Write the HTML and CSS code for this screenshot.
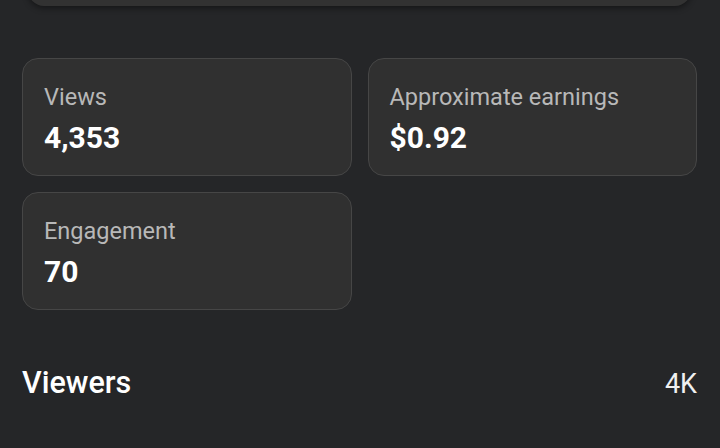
FILE: index.html
```html
<!DOCTYPE html>
<html>
<head>
<meta charset="utf-8">
<link rel="stylesheet" href="styles.css">
</head>
<body>
<div class="page">
  <div class="top-card"></div>
  <div class="stats">
    <div class="card">
      <div class="label">Views</div>
      <div class="value">4,353</div>
    </div>
    <div class="card">
      <div class="label">Approximate earnings</div>
      <div class="value">$0.92</div>
    </div>
    <div class="card">
      <div class="label">Engagement</div>
      <div class="value">70</div>
    </div>
  </div>
  <div class="section">
    <div class="section-title">Viewers</div>
    <div class="section-count">4K</div>
  </div>
</div>
</body>
</html>
```

FILE: styles.css
```css
html, body {
  margin: 0;
  padding: 0;
  background: #252628;
  height: 100%;
  overflow: hidden;
}
.page {
  padding: 0 23px 0 22px;
  font-family: Roboto, "Noto Sans", sans-serif;
  color: #ffffff;
}
.top-card {
  height: 30px;
  margin: -24px 6px 0 6px;
  background: #323232;
  border-radius: 0 0 16px 16px;
  box-shadow: 0 2px 6px rgba(0, 0, 0, 0.45);
}
.stats {
  margin-top: 52px;
  display: grid;
  grid-template-columns: 1fr 1fr;
  gap: 16px;
}
.card {
  background: #303030;
  border: 1px solid #464646;
  border-radius: 16px;
  padding: 24px 21px 20px 21px;
}
.label {
  font-size: 23.5px;
  line-height: 28px;
  color: #b8b8b8;
}
.value {
  margin-top: 10px;
  font-size: 30px;
  line-height: 34px;
  font-weight: 700;
  color: #ffffff;
}
.section {
  margin-top: 55px;
  display: flex;
  justify-content: space-between;
  align-items: baseline;
}
.section-title {
  font-size: 30.5px;
  line-height: 36px;
  font-weight: 500;
}
.section-count {
  font-size: 27px;
  line-height: 36px;
  color: #f0f0f0;
}
```
